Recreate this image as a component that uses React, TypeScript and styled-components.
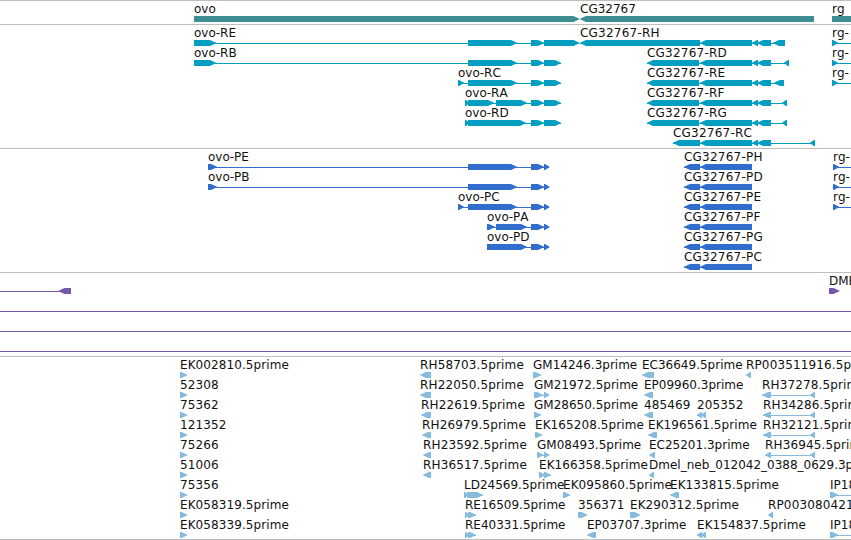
import React from 'react';
import styled, { createGlobalStyle } from 'styled-components';

const GlobalStyle = createGlobalStyle`
  body {
    margin: 0;
    background: #fff;
    overflow: hidden;
  }
`;

const Browser = styled.main`
  width: 851px;
  height: 540px;
  box-sizing: border-box;
  display: flex;
  flex-direction: column;
  overflow: hidden;
  border-bottom: 1px solid #bebebe;
  font-family: 'DejaVu Sans', sans-serif;
  font-size: 12px;
  font-kerning: none;
  color: #000;
`;

const TrackPanel = styled.section<{ $color: string }>`
  display: flex;
  flex-direction: column;
  flex-shrink: 0;
  border-top: 1px solid #bebebe;
  padding: 2px 0 1px;
  color: ${({ $color }) => $color};

  &:last-child {
    padding-bottom: 0;
  }
`;

const TrackRow = styled.div`
  height: 20px;
  display: flex;
  flex-direction: column;
`;

const LabelLane = styled.div`
  position: relative;
  height: 13px;
`;

// labels sit at the start coordinate of their feature and may overlap
const Label = styled.span<{ $tracking: number }>`
  position: absolute;
  top: 0;
  line-height: 12px;
  letter-spacing: ${({ $tracking }) => $tracking}px;
  white-space: pre;
  color: #111;
`;

const GlyphLane = styled.svg`
  display: block;
  width: 851px;
  height: 6px;
  fill: currentColor;
`;

type Block = [start: number, end: number];

interface Feature {
  name?: string;
  at?: number;
  dir: 1 | -1 | 0;
  blocks: Block[];
  line?: Block;
}

interface Track {
  id: string;
  color: string;
  rows: Feature[][];
}

const fwd = (name: string, blocks: Block[], line?: Block): Feature => ({ name, dir: 1, blocks, line });
const rev = (name: string, blocks: Block[], line?: Block): Feature => ({ name, dir: -1, blocks, line });
const span = (start: number, end: number): Feature => ({ dir: 0, blocks: [], line: [start, end] });

const ovoTail: Block[] = [[531, 544], [544, 561]];
const ovoCds: Block[] = [[531, 544], [544, 549.5]];
const cgTail: Block[] = [[700, 752], [752, 758], [757, 771]];
const cgCds: Block[] = [[684, 700], [700, 752]];

const rgTranscript = fwd('rg-', [[832, 838]], [832, 851]);
const rgCds = fwd('rg-', [[833, 839]], [833, 851]);

const tracks: Track[] = [
  {
    id: 'gene',
    color: '#3f8e94',
    rows: [
      [
        fwd('ovo', [[194, 579.5]]),
        rev('CG32767', [[580, 814]]),
        { name: 'rg', at: 832, dir: 0, blocks: [[832, 851]] },
      ],
    ],
  },
  {
    id: 'transcript',
    color: '#009ec1',
    rows: [
      [
        fwd('ovo-RE', [[194, 216], [468, 517], [531, 544], [544, 579.5]]),
        rev('CG32767-RH', [[580, 700], ...cgTail, [773, 785]]),
        rgTranscript,
      ],
      [
        fwd('ovo-RB', [[194, 216], [468, 517], ...ovoTail]),
        rev('CG32767-RD', [[647, 699], ...cgTail, [784, 789]]),
        rgTranscript,
      ],
      [
        fwd('ovo-RC', [[458, 464], [468, 517], ...ovoTail]),
        rev('CG32767-RE', [[647, 699], ...cgTail, [774, 784]]),
        rgTranscript,
      ],
      [
        fwd('ovo-RA', [[465, 469], [468, 494], [496, 527], ...ovoTail]),
        rev('CG32767-RF', [[647, 699], ...cgTail, [782, 787]]),
      ],
      [
        fwd('ovo-RD', [[465, 469], [468, 526], ...ovoTail]),
        rev('CG32767-RG', [[647, 699], ...cgTail, [782, 787]]),
      ],
      [rev('CG32767-RC', [[673, 700], ...cgTail, [810, 815]])],
    ],
  },
  {
    id: 'cds',
    color: '#306dcc',
    rows: [
      [fwd('ovo-PE', [[208, 217], [468, 517], ...ovoCds]), rev('CG32767-PH', cgCds), rgCds],
      [fwd('ovo-PB', [[208, 217], [468, 517], ...ovoCds]), rev('CG32767-PD', cgCds), rgCds],
      [fwd('ovo-PC', [[458, 464], [468, 517], ...ovoCds]), rev('CG32767-PE', cgCds), rgCds],
      [fwd('ovo-PA', [[487, 495], [496, 527], ...ovoCds]), rev('CG32767-PF', cgCds)],
      [fwd('ovo-PD', [[487, 527], ...ovoCds]), rev('CG32767-PG', cgCds)],
      [rev('CG32767-PC', cgCds)],
    ],
  },
  {
    id: 'mrna',
    color: '#7858aa',
    rows: [
      [{ dir: -1, blocks: [[58.5, 71]], line: [0, 71] }, fwd('DME', [[829, 839.5]])],
      [span(0, 851)],
      [span(0, 851)],
      [span(0, 851)],
    ],
  },
  {
    id: 'est',
    color: '#87bbde',
    rows: [
      [
        fwd('EK002810.5prime', [[180, 187.5]]),
        rev('RH58703.5prime', [[420, 431]]),
        fwd('GM14246.3prime', [[533, 541.5]]),
        rev('EC36649.5prime', [[642, 654]]),
        rev('RP003511916.5prime', [[746, 751]]),
      ],
      [
        fwd('52308', [[180, 187.5]]),
        rev('RH22050.5prime', [[420, 431]]),
        fwd('GM21972.5prime', [[534, 543], [544, 549.5]]),
        rev('EP09960.3prime', [[644, 653]]),
        rev('RH37278.5prime', [[762, 771], [810, 815]]),
      ],
      [
        fwd('75362', [[180, 187.5]]),
        rev('RH22619.5prime', [[421, 431]]),
        fwd('GM28650.5prime', [[534, 541.5]]),
        rev('485469', [[644, 653]]),
        rev('205352', [[697, 702], [701, 706]]),
        rev('RH34286.5prime', [[763, 771], [810, 815]]),
      ],
      [
        fwd('121352', [[180, 187.5]]),
        rev('RH26979.5prime', [[422, 431]]),
        fwd('EK165208.5prime', [[535, 542.5]]),
        rev('EK196561.5prime', [[648, 657]]),
        rev('RH32121.5prime', [[763, 771], [810, 815]]),
      ],
      [
        fwd('75266', [[180, 187.5]]),
        rev('RH23592.5prime', [[423, 431]]),
        fwd('GM08493.5prime', [[537, 543.5], [544, 549.5]]),
        rev('EC25201.3prime', [[649, 655]]),
        rev('RH36945.5prime', [[765, 771], [810, 815]]),
      ],
      [
        fwd('51006', [[180, 187.5]]),
        rev('RH36517.5prime', [[423, 431]]),
        fwd('EK166358.5prime', [[539, 545.5], [544, 551]]),
        rev('Dmel_neb_012042_0388_0629.3prime', [[649, 654]]),
      ],
      [
        fwd('75356', [[180, 187.5]]),
        fwd('LD24569.5prime', [[464, 468.5], [467, 483]]),
        fwd('EK095860.5prime', [[563, 570.5]]),
        rev('EK133815.5prime', [[670, 679]]),
        fwd('IP18', [[830, 838.5]], [830, 851]),
      ],
      [
        fwd('EK058319.5prime', [[180, 187.5]]),
        fwd('RE16509.5prime', [[465, 469], [468, 476]]),
        fwd('356371', [[578, 587.5]]),
        fwd('EK290312.5prime', [[630, 640.5]]),
        rev('RP003080421', [[768, 773]]),
      ],
      [
        fwd('EK058339.5prime', [[180, 187.5]]),
        fwd('RE40331.5prime', [[465, 469], [468, 476]]),
        rev('EP03707.3prime', [[587, 596]]),
        rev('EK154837.5prime', [[697, 702], [701, 706]]),
        fwd('IP18', [[830, 838.5]], [830, 851]),
      ],
    ],
  },
];

const HEAD = 6;

const labelTracking = (name: string) => {
  if (/^CG\d+-/.test(name)) return 0.22;
  if (/^(R[HP]|\d)/.test(name)) return 0.14;
  if (/^EK/.test(name)) return 0.08;
  return 0;
};

const blockPoints = ([start, end]: Block, dir: Feature['dir']) => {
  if (dir === 0) {
    return `${start},0 ${end},0 ${end},6 ${start},6`;
  }
  if (dir === 1) {
    const neck = Math.max(start + 1, end - HEAD);
    return `${start},0 ${neck},0 ${end},2.7 ${end},3.2 ${neck},6 ${start},6`;
  }
  const neck = Math.min(end - 1, start + HEAD);
  return `${end},0 ${neck},0 ${start},2.7 ${start},3.2 ${neck},6 ${end},6`;
};

const Glyph: React.FC<{ feature: Feature }> = ({ feature }) => {
  const { blocks, dir } = feature;
  const line = feature.line ?? [Math.ceil(blocks[0][0]), Math.floor(blocks[blocks.length - 1][1])];

  return (
    <g>
      {(feature.line || blocks.length > 1) && (
        <rect x={line[0]} y={3} width={line[1] - line[0]} height={1} />
      )}
      {blocks.map((block, i) => (
        <polygon key={i} points={blockPoints(block, dir)} />
      ))}
    </g>
  );
};

const App: React.FC = () => (
  <>
    <GlobalStyle />
    <Browser>
      {tracks.map((track) => (
        <TrackPanel key={track.id} $color={track.color}>
          {track.rows.map((row, r) => (
            <TrackRow key={r}>
              <LabelLane>
                {row.map((feature, i) =>
                  feature.name ? (
                    <Label
                      key={i}
                      $tracking={labelTracking(feature.name)}
                      style={{ left: feature.at ?? feature.blocks[0][0] }}
                    >
                      {feature.name}
                    </Label>
                  ) : null
                )}
              </LabelLane>
              <GlyphLane>
                {row.map((feature, i) => (
                  <Glyph key={i} feature={feature} />
                ))}
              </GlyphLane>
            </TrackRow>
          ))}
        </TrackPanel>
      ))}
    </Browser>
  </>
);

export default App;
